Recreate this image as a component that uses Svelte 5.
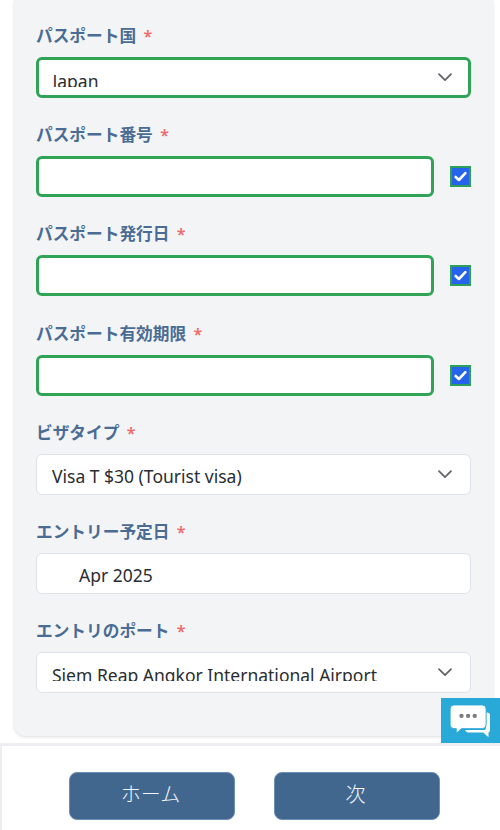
<script>
  // Passport / visa step of the application form
  const fields = [
    { label: 'パスポート国', kind: 'select', value: 'Japan', ok: true, clip: 'clip-low' },
    { label: 'パスポート番号', kind: 'input', value: '', ok: true, check: true },
    { label: 'パスポート発行日', kind: 'input', value: '', ok: true, check: true },
    { label: 'パスポート有効期限', kind: 'input', value: '', ok: true, check: true },
    { label: 'ビザタイプ', kind: 'select', value: 'Visa T $30 (Tourist visa)' },
    { label: 'エントリー予定日', kind: 'input', value: 'Apr 2025', indent: true },
    { label: 'エントリのポート', kind: 'select', value: 'Siem Reap Angkor International Airport', clip: 'clip-mid' }
  ];
</script>

<div class="page">
  <main class="card">
    {#each fields as f}
      <div class="field">
        <div class="label">{f.label} <span class="req">*</span></div>
        <div class="row">
          <div class="control" class:ok={f.ok}>
            <span class="value {f.clip || ''}" class:indent={f.indent}>{f.value}</span>
            {#if f.kind === 'select'}
              <svg class="chevron" width="14" height="9" viewBox="0 0 14 9" fill="none">
                <path d="M1 1.2 L7 7.2 L13 1.2" stroke="#5f6368" stroke-width="1.7" stroke-linecap="round" stroke-linejoin="round" />
              </svg>
            {/if}
          </div>
          {#if f.check}
            <span class="check">
              <svg width="15" height="15" viewBox="0 0 15 15" fill="none">
                <path d="M2.6 8 L5.9 11 L12.4 4.2" stroke="#fff" stroke-width="2.6" stroke-linecap="round" stroke-linejoin="round" />
              </svg>
            </span>
          {/if}
        </div>
      </div>
    {/each}
  </main>

  <button class="chat" aria-label="チャット">
    <svg width="42" height="36" viewBox="0 0 44 38">
      <path d="M39 9 h1 a3 3 0 0 1 3 3 v16 a2 2 0 0 1 -1.5 2 v5 l-5.5 -5 h-16 a3 3 0 0 1 -3 -2.5 h19 a3 3 0 0 0 3 -3 z" fill="#fff" />
      <path d="M5 1 h30 a4 4 0 0 1 4 4 v17 a4 4 0 0 1 -4 4 h-22 l-5.5 5 v-5 h-2.500 a4 4 0 0 1 -4 -4 v-17 a4 4 0 0 1 4 -4 z" fill="#fff" stroke="#29a9d8" stroke-width="1" />
      <circle cx="13" cy="12.500" r="2.300" fill="#7d7d7d" />
      <circle cx="20" cy="12.500" r="2.300" fill="#7d7d7d" />
      <circle cx="27" cy="12.500" r="2.300" fill="#7d7d7d" />
    </svg>
  </button>

  <footer class="footer">
    <button class="btn">ホーム</button>
    <button class="btn">次</button>
  </footer>
</div>

<style>
  :global(body) {
    margin: 0;
    background: #fff;
    font-family: "Noto Sans", "Noto Sans CJK JP", sans-serif;
  }

  .page {
    position: relative;
    width: 500px;
    height: 830px;
    overflow: hidden;
    display: flex;
    flex-direction: column;
  }

  .card {
    box-sizing: border-box;
    height: 736px;
    margin: 0 7px 0 14px;
    padding: 25px 22px 0;
    background: #f3f4f6;
    border-radius: 0 0 12px 12px;
    box-shadow: 0 1px 3px rgba(0, 0, 0, 0.14);
  }

  .field {
    height: 99.2px;
  }

  .label {
    height: 22px;
    line-height: 22px;
    margin-bottom: 10px;
    font-size: 16.7px;
    font-weight: 600;
    color: #4a6c94;
  }

  .req {
    color: #ef6a6a;
    font-size: 16px;
    line-height: 16px;
    margin-left: 3px;
  }

  .row {
    display: flex;
    align-items: center;
  }

  .control {
    box-sizing: border-box;
    flex: 1;
    height: 41px;
    padding: 0 17px 0 15px;
    display: flex;
    align-items: center;
    justify-content: space-between;
    background: #fff;
    border: 1.5px solid #dfe2e8;
    border-radius: 6px;
  }

  .control.ok {
    border: 3px solid #2fa356;
    padding-left: 13.500px;
    padding-right: 15.500px;
  }

  .value {
    font-size: 17.5px;
    line-height: 24px;
    height: 24px;
    margin-top: 3px;
    color: #2a2d33;
    white-space: nowrap;
    overflow: hidden;
  }

  .value.indent {
    padding-left: 27px;
  }

  .value.clip-low {
    height: 14px;
    line-height: 17px;
    margin-top: 5px;
  }

  .value.clip-mid {
    height: 14px;
    line-height: 17px;
    margin-top: 2px;
  }

  .chevron {
    flex: none;
    margin-right: 1px;
  }

  .check {
    box-sizing: border-box;
    flex: none;
    width: 21px;
    height: 21px;
    margin-left: 16px;
    display: flex;
    align-items: center;
    justify-content: center;
    background: #2563eb;
    border: 2px solid #2f9e5b;
  }

  .chat {
    position: absolute;
    left: 441px;
    top: 698px;
    width: 59px;
    height: 45px;
    padding: 6px 0 0 8px;
    display: flex;
    align-items: flex-start;
    background: #29a9d8;
    border: none;
  }

  .footer {
    box-sizing: border-box;
    height: 87px;
    margin-top: 7px;
    padding: 26px 60px 0 67px;
    display: flex;
    gap: 39px;
    background: #fff;
    border-top: 3px solid #eceef1;
    border-left: 2px solid #eceef1;
  }

  .btn {
    width: 166px;
    height: 48px;
    padding: 0 3px 5px 0;
    background: #41678f;
    color: #f2f6fa;
    border: 1px solid #6c90b4;
    border-radius: 8px;
    font-family: inherit;
    font-size: 20px;
    font-weight: 300;
  }
</style>
